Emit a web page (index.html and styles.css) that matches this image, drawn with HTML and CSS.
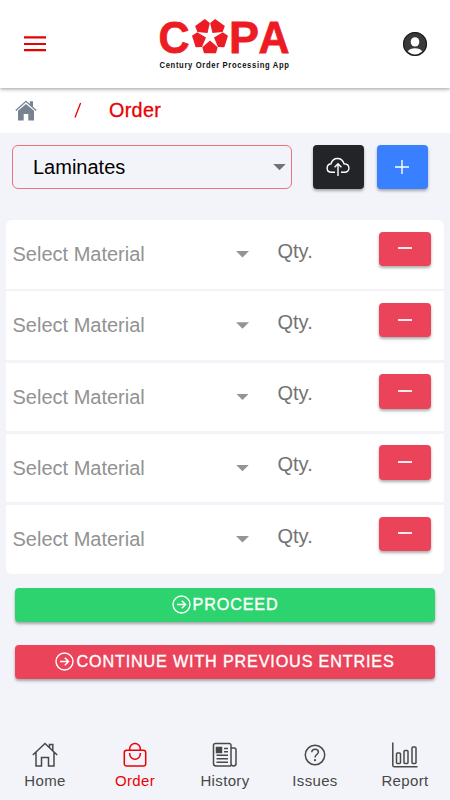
FILE: index.html
```html
<!DOCTYPE html>
<html lang="en">
<head>
<meta charset="utf-8">
<title>COPA - Order</title>
<link rel="stylesheet" href="styles.css">
</head>
<body>
<header class="header">
  <svg class="menu" viewBox="0 0 24 18"><path d="M1 2.4h22M1 9h22M1 15.2h22"/></svg>
  <svg class="logo" viewBox="0 0 150 70" role="img" aria-label="COPA">
    <g class="wordmark">
      <text x="8.5" y="42.5" textLength="31" lengthAdjust="spacingAndGlyphs">C</text>
      <text x="79" y="42.5" textLength="30" lengthAdjust="spacingAndGlyphs">P</text>
      <text x="108.5" y="42.5" textLength="31" lengthAdjust="spacingAndGlyphs">A</text>
    </g>
    <g class="petals" transform="translate(60 26.3)">
      <path id="petal" d="M0 4.2L7.7 10.9L6 17H-6L-7.7 10.9Z"/>
      <use href="#petal" transform="rotate(72)"/>
      <use href="#petal" transform="rotate(144)"/>
      <use href="#petal" transform="rotate(216)"/>
      <use href="#petal" transform="rotate(288)"/>
    </g>
    <text class="tagline" transform="translate(9.5 57.5) scale(.78 1)" textLength="166">Century Order Processing App</text>
  </svg>
  <svg class="user" viewBox="0 0 24 24"><circle cx="12" cy="12" r="12" fill="#3a3a3a"/><circle cx="12" cy="12" r="11.5" fill="none" stroke="#161616"/><ellipse cx="12" cy="9.9" rx="4.3" ry="4.7" fill="#fff"/><path d="M4.8 19.5C7 15.2 17 15.2 19.2 19.5Q12 25.3 4.8 19.5Z" fill="#fff"/></svg>
</header>
<nav class="crumbs">
  <svg class="crumb-home" viewBox="0 0 22 21"><path d="M3 10.8L11 4L19 10.8V20.5H13.3V14H8.7V20.5H3Z"/><path d="M14.8 1.3H18V7.3L14.8 4.5Z"/><path class="roof" d="M.8 10.5L11 1.3L21.2 10.5"/></svg>
  <svg class="slash" viewBox="0 0 8 17" role="img" aria-label="/"><path d="M1 15.5L6.6 1"/></svg>
  <span class="crumb">Order</span>
</nav>
<main>
  <section class="toolbar">
    <div class="select"><span>Laminates</span><i class="caret"></i></div>
    <button class="btn dark" aria-label="Upload"><svg width="24" height="20" viewBox="0 0 24 20"><path d="M9 15.3H5.7C-.3 15.3-.2 7.6 5 6.8C7-.3 16-.2 18 6.8C24.5 7 24.5 15.3 18.5 15.3H15M12 19V7M8.6 10.2L12 6.8L15.4 10.2"/></svg></button>
    <button class="btn blue" aria-label="Add"><svg width="16" height="16" viewBox="0 0 16 16"><path d="M1 8h14M8 1v14"/></svg></button>
  </section>
  <section class="list">
    <div class="row"><span class="material">Select Material</span><i class="caret"></i><span class="qty">Qty.</span><button class="btn remove" aria-label="Remove"><i></i></button></div>
    <div class="row"><span class="material">Select Material</span><i class="caret"></i><span class="qty">Qty.</span><button class="btn remove" aria-label="Remove"><i></i></button></div>
    <div class="row"><span class="material">Select Material</span><i class="caret"></i><span class="qty">Qty.</span><button class="btn remove" aria-label="Remove"><i></i></button></div>
    <div class="row"><span class="material">Select Material</span><i class="caret"></i><span class="qty">Qty.</span><button class="btn remove" aria-label="Remove"><i></i></button></div>
    <div class="row"><span class="material">Select Material</span><i class="caret"></i><span class="qty">Qty.</span><button class="btn remove" aria-label="Remove"><i></i></button></div>
  </section>
  <section class="actions">
    <button class="btn wide green"><svg width="19" height="19" viewBox="0 0 19 19"><circle cx="9.5" cy="9.5" r="8.5"/><path d="M5 9.5h8.5M9.8 5.7l3.8 3.8l-3.8 3.8"/></svg><span>PROCEED</span></button>
    <button class="btn wide red"><svg width="19" height="19" viewBox="0 0 19 19"><circle cx="9.5" cy="9.5" r="8.5"/><path d="M5 9.5h8.5M9.8 5.7l3.8 3.8l-3.8 3.8"/></svg><span>CONTINUE WITH PREVIOUS ENTRIES</span></button>
  </section>
</main>
<footer class="tabs">
  <a class="tab"><svg viewBox="0 0 26 26"><path d="M.8 13L13 1.5L25.2 13M4 10.5V24h5.5v-8.5h7V24H22V10.5M17.5 5.5V2.5h3.3v6"/></svg><span>Home</span></a>
  <a class="tab active"><svg viewBox="0 0 26 26"><rect x="2.3" y="8.2" width="21.4" height="15.8" rx="2.3"/><path d="M7.7 8V6.8a5.3 5.3 0 0 1 10.6 0V8M7.7 11v1a5.3 5.3 0 0 0 10.6 0v-1"/></svg><span>Order</span></a>
  <a class="tab"><svg viewBox="0 0 26 26"><path d="M19 24H4a2.5 2.5 0 0 1-2.5-2.5V3.2A1.7 1.7 0 0 1 3.2 1.5h14A1.7 1.7 0 0 1 19 3.2V21.5a2.5 2.5 0 0 0 5 0V7.8A1.8 1.8 0 0 0 22.2 6H19M12 6.4h4M12 9.8h4M4.5 13.2H16M4.5 16.7H16M4.5 20.2H16"/><rect class="solid" x="4.5" y="5.5" width="5" height="5"/></svg><span>History</span></a>
  <a class="tab"><svg viewBox="0 0 26 26"><circle cx="13" cy="13" r="9.7"/><path d="M9.8 10.3C9.8 5.9 16.4 6.4 16.4 10C16.4 12.5 13 12.6 13 15.5"/><circle class="solid dot" cx="13" cy="18.2" r="1.1"/></svg><span>Issues</span></a>
  <a class="tab"><svg viewBox="0 0 26 26"><path d="M.8 .5V23.2a1.6 1.6 0 0 0 1.6 1.6H25.5"/><rect x="4.5" y="11" width="4" height="10.5" rx="1"/><rect x="12" y="8.5" width="4" height="13" rx="1"/><rect x="20" y="5" width="4" height="16.5" rx="1"/></svg><span>Report</span></a>
</footer>
</body>
</html>
```
FILE: styles.css
```css
* { box-sizing: border-box; }
body {
  margin: 0;
  height: 800px;
  display: flex;
  flex-direction: column;
  overflow: hidden;
  background: #f3f4f9;
  color: #000;
  font-family: "Liberation Sans", Arial, sans-serif;
}
svg { display: block; flex: none; }
.header {
  height: 88px;
  flex: none;
  display: flex;
  align-items: center;
  justify-content: space-between;
  padding: 0 23px;
  background: #fff;
  box-shadow: 0 1px 4px rgba(0, 0, 0, .4);
  z-index: 1;
}
.menu { width: 24px; height: 18px; fill: none; stroke: #eb0000; stroke-width: 2.2; }
.logo { width: 150px; height: 70px; margin-top: 2px; }
.wordmark { font-size: 45px; font-weight: bold; fill: #ed1b24; stroke: #ed1b24; stroke-width: .8; }
.petals { fill: #ed1b24; }
.tagline { font-size: 9.8px; font-weight: bold; fill: #111; }
.user { width: 24px; height: 24px; }
.crumbs {
  height: 45px;
  flex: none;
  display: flex;
  align-items: center;
  padding-left: 15px;
  background: #fff;
  color: #e90000;
}
.crumb-home { width: 22px; height: 21px; fill: #778390; }
.crumb-home .roof { fill: none; stroke: #778390; stroke-width: 1.3; }
.slash { width: 8px; height: 17px; margin: 0 26px 0 37px; fill: none; stroke: #e90000; stroke-width: 1.3; }
.crumb { font-size: 19.8px; padding-left: 1px; letter-spacing: .3px; -webkit-text-stroke: .3px #e90000; }
.toolbar { display: flex; padding: 12px 0 0 12px; height: 87px; }
.select {
  width: 280px;
  height: 44px;
  margin-right: 20.5px;
  display: flex;
  align-items: center;
  justify-content: space-between;
  padding: 0 5px 0 20px;
  border: 1px solid #ee7378;
  border-radius: 6px;
  font-size: 20px;
}
.caret {
  width: 13px;
  height: 6.5px;
  background: #949494;
  clip-path: polygon(0 0, 100% 0, 50% 100%);
}
.select .caret { background: #707276; }
.btn {
  display: flex;
  align-items: center;
  justify-content: center;
  padding: 0;
  border: 0;
  border-radius: 4px;
  color: #fff;
  font-family: inherit;
  box-shadow: 0 2px 3px rgba(0, 0, 0, .32);
}
.btn svg { fill: none; stroke: #fff; stroke-width: 1.4; }
.toolbar .btn { width: 51.5px; height: 43.5px; }
.dark { background: #222428; margin-right: 12.5px; }
.blue { background: #3880ff; }
.list { display: grid; gap: 2.75px; margin: 0 6px; border-radius: 6px; overflow: hidden; }
.row {
  height: 68.5px;
  display: grid;
  grid-template-columns: 223.5px 13px 130px 52px;
  align-items: start;
  padding: 11.5px 0 0 6.5px;
  background: #fff;
  font-size: 20px;
  line-height: 24px;
}
.material { padding-top: 10.5px; color: #929292; }
.row .caret { margin-top: 19.5px; }
.qty { padding: 7px 0 0 28.5px; color: #737373; }
.remove { height: 34.5px; background: #eb445a; }
.remove i { width: 14px; height: 2px; margin-bottom: 1px; background: #ffe9ec; }
.actions { display: grid; gap: 22.5px; padding: 14px 15px 0; }
.wide {
  height: 34.5px;
  font-size: 16.2px;
  gap: 2px;
  letter-spacing: .83px;
  -webkit-text-stroke: .35px #fff;
}
.green { background: #2dd36f; }
.red { background: #eb445a; }
.tabs { height: 62px; margin-top: auto; display: grid; grid-template-columns: repeat(5, 1fr); }
.tab {
  display: flex;
  flex-direction: column;
  align-items: center;
  padding-top: 4px;
  color: #484848;
  font-size: 15px;
  line-height: 18px;
  letter-spacing: .35px;
}
.tab svg { width: 26px; height: 26px; margin-bottom: 4px; fill: none; stroke: currentColor; stroke-width: 1.5; }
.tab .solid { fill: currentColor; }
.tab .dot { stroke: none; }
.active { color: #ed0000; }
```
